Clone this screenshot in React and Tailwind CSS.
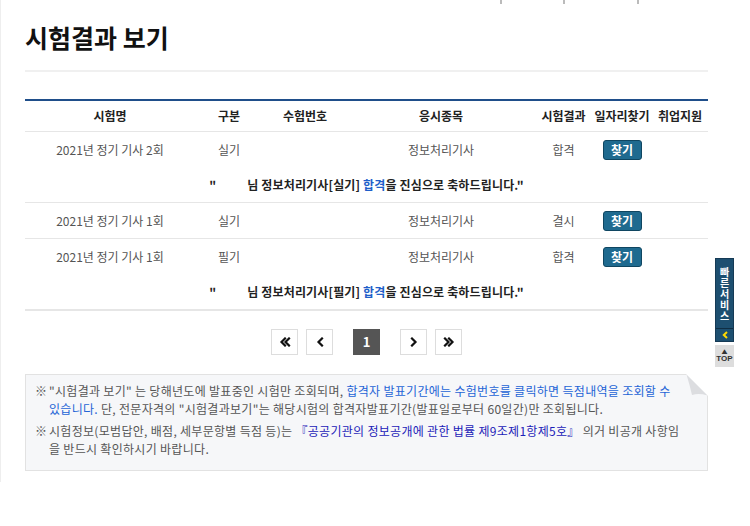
import React from 'react';

const rows = [
  { name: '2021년 정기 기사 2회', kind: '실기', subject: '정보처리기사', result: '합격', msg: '실기', line: true },
  { name: '2021년 정기 기사 1회', kind: '실기', subject: '정보처리기사', result: '결시', line: true },
  { name: '2021년 정기 기사 1회', kind: '필기', subject: '정보처리기사', result: '합격', msg: '필기', line: false },
];

const cols = 'grid grid-cols-[170px_68px_84px_188px_57px_60px_56px] items-center text-center';

function FindButton() {
  return (
    <button className="w-[39px] h-[20px] bg-[#1f6a8f] border border-[#0f4661] rounded-[3px] text-white text-[12px] font-bold leading-none">
      찾기
    </button>
  );
}

function Chevron({ dir, double }) {
  const one = dir === 'left' ? 'M6 1.5 L2.5 5 L6 8.5' : 'M2 1.5 L5.5 5 L2 8.5';
  const two = dir === 'left' ? 'M10 1.5 L6.5 5 L10 8.5' : 'M6 1.5 L9.5 5 L6 8.5';
  return (
    <svg width={double ? 12 : 8} height="10" viewBox={double ? '0 0 12 10' : '0 0 8 10'} fill="none" stroke="#111" strokeWidth="2.2" strokeLinecap="square">
      <path d={one} />
      {double && <path d={two} />}
    </svg>
  );
}

function PageBox({ children, active }) {
  return (
    <div
      className={`w-[27px] h-[26px] flex items-center justify-center text-[13px] font-bold ${
        active ? 'bg-[#555] text-white' : 'bg-white border border-[#ddd] text-black'
      }`}
    >
      {children}
    </div>
  );
}

export default function App() {
  return (
    <div className="w-[750px] h-[526px] bg-white relative overflow-hidden font-['Noto_Sans_CJK_KR','Noto_Sans',sans-serif]">
      <div className="w-[734px] border-l border-[#eee] pl-[24px] pr-[26px] pb-[11px]">
        {/* top nav remains */}
        <div className="h-[4px] flex">
          <div className="w-[475px]" />
          <div className="w-[2px] h-[4px] bg-[#bbb]" />
          <div className="w-[61px]" />
          <div className="w-[2px] h-[4px] bg-[#bbb]" />
          <div className="w-[72px]" />
          <div className="w-[2px] h-[4px] bg-[#bbb]" />
        </div>

        <h1 className="mt-[17px] text-[25px] leading-[32px] font-bold text-[#111]">시험결과 보기</h1>
        <div className="mt-[17px] h-[2px] bg-[#f0f0f0]" />

        <div className="mt-[27px] border-t-2 border-[#1f4e8a]">
          <div className={`${cols} h-[31px] border-b border-[#e6e6e6] text-[12px] font-bold text-[#222]`}>
            <div>시험명</div>
            <div>구분</div>
            <div>수험번호</div>
            <div>응시종목</div>
            <div>시험결과</div>
            <div>일자리찾기</div>
            <div>취업지원</div>
          </div>

          {rows.map((r, i) => (
            <div key={i} className={r.line ? 'border-b border-[#e6e6e6]' : 'border-b-2 border-[#e6e6e6]'}>
              <div className={`${cols} h-[35px] text-[12px] text-[#555]`}>
                <div>{r.name}</div>
                <div>{r.kind}</div>
                <div />
                <div>{r.subject}</div>
                <div>{r.result}</div>
                <div className="flex justify-center">
                  <FindButton />
                </div>
                <div />
              </div>
              {r.msg && (
                <div className="h-[35px] flex items-center justify-center text-[12px] font-bold text-[#222] tracking-[0.15px]">
                  <span>"</span>
                  <span className="inline-block w-[31px]" />
                  <span>
                    님 정보처리기사[{r.msg}] <span className="text-[#1f5fc9]">합격</span>을 진심으로 축하드립니다."
                  </span>
                </div>
              )}
            </div>
          ))}
        </div>

        {/* pagination */}
        <div className="mt-[18px] flex justify-center items-center">
          <div className="flex items-center gap-[8px]">
            <PageBox>
              <Chevron dir="left" double />
            </PageBox>
            <PageBox>
              <Chevron dir="left" />
            </PageBox>
          </div>
          <div className="mx-[20px]">
            <PageBox active>1</PageBox>
          </div>
          <div className="flex items-center gap-[8px]">
            <PageBox>
              <Chevron dir="right" />
            </PageBox>
            <PageBox>
              <Chevron dir="right" double />
            </PageBox>
          </div>
        </div>

        {/* notice box */}
        <div className="relative mt-[19px] bg-[#f6f7f9] border border-[#e2e2e2] pt-[7px] pb-[12px] pl-[9px] pr-[26px] text-[12px] leading-[18px] text-[#555] tracking-[0.3px]">
          <div className="flex">
            <span className="w-[14px] shrink-0">※</span>
            <p>
              "시험결과 보기" 는 당해년도에 발표중인 시험만 조회되며,{' '}
              <span className="text-[#2464d6]">합격자 발표기간에는 수험번호를 클릭하면 득점내역을 조회할 수 있습니다.</span>{' '}
              단, 전문자격의 "시험결과보기"는 해당시험의 합격자발표기간(발표일로부터 60일간)만 조회됩니다.
            </p>
          </div>
          <div className="flex mt-[4px]">
            <span className="w-[14px] shrink-0">※</span>
            <p>
              시험정보(모범답안, 배점, 세부문항별 득점 등)는{' '}
              <span className="text-[#1c22b8]">『공공기관의 정보공개에 관한 법률 제9조제1항제5호』</span> 의거 비공개 사항임을 반드시
              확인하시기 바랍니다.
            </p>
          </div>
          <svg className="absolute -top-px -right-px" width="22" height="22" viewBox="0 0 22 22">
            <polygon points="0,0 22,0 22,22" fill="#ffffff" />
            <path d="M0.5 0.5 L21.5 21.5 Q13 19 6 21 Q4 12 0.5 0.5 Z" fill="#dcdde0" />
          </svg>
        </div>
      </div>

      {/* quick service */}
      <div className="absolute left-[715px] top-[258px] w-[19px]">
        <div className="bg-[#1d4f70] border border-[#153a55]">
          <div className="flex flex-col items-center py-[7px] text-white text-[10px] font-bold leading-[11px]">
            <span>빠</span>
            <span>른</span>
            <span>서</span>
            <span>비</span>
            <span>스</span>
          </div>
          <div className="h-[13px] border-t border-[#0f2e44] flex items-center justify-center">
            <svg width="6" height="8" viewBox="0 0 6 8" fill="none" stroke="#ffd800" strokeWidth="2">
              <path d="M5 1 L1.8 4 L5 7" />
            </svg>
          </div>
        </div>
        <div className="mt-[3px] h-[22px] bg-[#ddd] flex flex-col items-center justify-center text-[#333] leading-none">
          <span className="text-[6px]">▲</span>
          <span className="text-[8px] font-bold font-['Liberation_Sans',sans-serif]">TOP</span>
        </div>
      </div>
    </div>
  );
}
